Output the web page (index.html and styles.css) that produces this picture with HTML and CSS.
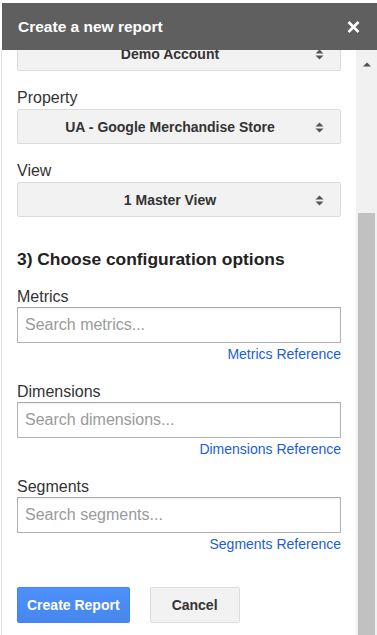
FILE: index.html
```html
<!DOCTYPE html>
<html>
<head>
<meta charset="utf-8">
<link rel="stylesheet" href="styles.css">
</head>
<body>
<div class="frame">
  <div class="header">
    <span class="title">Create a new report</span>
    <svg class="close" width="13" height="12" viewBox="0 0 13 12"><path d="M1.5 1 L11.5 11 M11.5 1 L1.5 11" stroke="#fff" stroke-width="2.6" fill="none"/></svg>
  </div>
  <div class="main">
    <div class="panel">
      <div class="inner">
        <div class="select first"><span>Demo Account</span><svg class="arrows" width="9" height="11" viewBox="0 0 9 11"><path d="M0.5 4.5 L4.5 0.5 L8.5 4.5 Z M0.5 6.5 L8.5 6.5 L4.5 10.5 Z" fill="#555"/></svg></div>
        <div class="label">Property</div>
        <div class="select"><span>UA - Google Merchandise Store</span><svg class="arrows" width="9" height="11" viewBox="0 0 9 11"><path d="M0.5 4.5 L4.5 0.5 L8.5 4.5 Z M0.5 6.5 L8.5 6.5 L4.5 10.5 Z" fill="#555"/></svg></div>
        <div class="label">View</div>
        <div class="select"><span>1 Master View</span><svg class="arrows" width="9" height="11" viewBox="0 0 9 11"><path d="M0.5 4.5 L4.5 0.5 L8.5 4.5 Z M0.5 6.5 L8.5 6.5 L4.5 10.5 Z" fill="#555"/></svg></div>
        <h2 class="heading">3) Choose configuration options</h2>
        <div class="field">
          <div class="label">Metrics</div>
          <div class="input">Search metrics...</div>
          <a class="ref">Metrics Reference</a>
        </div>
        <div class="field">
          <div class="label">Dimensions</div>
          <div class="input">Search dimensions...</div>
          <a class="ref">Dimensions Reference</a>
        </div>
        <div class="field">
          <div class="label">Segments</div>
          <div class="input">Search segments...</div>
          <a class="ref">Segments Reference</a>
        </div>
        <div class="buttons">
          <button class="btn primary">Create Report</button>
          <button class="btn secondary">Cancel</button>
        </div>
      </div>
    </div>
    <div class="scrollbar">
      <div class="up"><svg width="8" height="5" viewBox="0 0 8 5"><path d="M0 4.5 L4 0.5 L8 4.5 Z" fill="#505050"/></svg></div>
      <div class="track"><div class="thumb"></div></div>
    </div>
  </div>
</div>
</body>
</html>
```

FILE: styles.css
```css
html, body {
  margin: 0;
  padding: 0;
  background: #fff;
}
body {
  font-family: "Liberation Sans", Arial, sans-serif;
  color: #333;
}
.frame {
  width: 377px;
  height: 635px;
  box-sizing: border-box;
  padding-top: 3px;
  padding-left: 1px;
  display: flex;
  flex-direction: column;
  overflow: hidden;
}
.header {
  height: 47px;
  margin-left: 1px;
  background: #5f5f5f;
  display: flex;
  align-items: center;
  justify-content: space-between;
  padding: 0 17px 0 16px;
  flex-shrink: 0;
  position: relative;
  z-index: 2;
}
.title {
  color: #fff;
  font-weight: bold;
  font-size: 15.5px;
}
.close {
  display: block;
  margin-top: 1px;
}
.main {
  flex: 1;
  display: flex;
  min-height: 0;
}
.panel {
  flex: 1;
  border-left: 1px solid #e2e2e2;
  padding: 0 15px;
  overflow: hidden;
}
.inner {
  margin-top: -14px;
}
.select {
  height: 35px;
  box-sizing: border-box;
  background: #f2f2f2;
  border: 1px solid #dcdcdc;
  border-radius: 2px;
  display: flex;
  align-items: center;
  position: relative;
  padding: 0 32px 0 14px;
  font-size: 14px;
  font-weight: bold;
  color: #333;
}
.select span {
  flex: 1;
  text-align: center;
}
.arrows {
  position: absolute;
  right: 16px;
  top: 12px;
}
.label {
  font-size: 16px;
  line-height: 20px;
  margin-top: 17px;
  margin-bottom: 1px;
  color: #333;
}
.heading {
  font-size: 17.4px;
  font-weight: bold;
  line-height: 24px;
  margin: 30px 0 0;
  color: #222;
}
.field .label {
  margin-top: 20px;
  margin-bottom: 0;
}
.heading + .field .label {
  margin-top: 16px;
}
.input {
  height: 36px;
  box-sizing: border-box;
  border: 1px solid #b3b3b3;
  border-top-color: #a9a9a9;
  box-shadow: inset 0 1px 2px rgba(0, 0, 0, 0.06);
  padding: 0 7px;
  display: flex;
  align-items: center;
  font-size: 16px;
  color: #9a9a9a;
}
.ref {
  display: block;
  text-align: right;
  font-size: 14px;
  line-height: 16px;
  margin-top: 3px;
  color: #1a5ed6;
}
.buttons {
  display: flex;
  gap: 20px;
  margin-top: 35px;
}
.btn {
  height: 36px;
  font-family: "Liberation Sans", Arial, sans-serif;
  font-size: 14px;
  font-weight: bold;
  border-radius: 2px;
  box-sizing: border-box;
  cursor: pointer;
}
.primary {
  background: linear-gradient(#4d90fe, #4787ed);
  border: 1px solid #3f85f5;
  color: #fff;
  padding: 0 9px;
}
.secondary {
  background: #f2f2f2;
  border: 1px solid #dcdcdc;
  color: #333;
  min-width: 90px;
}
.scrollbar {
  width: 21px;
  background: #f1f1f1;
  display: flex;
  flex-direction: column;
}
.up {
  height: 27px;
  display: flex;
  align-items: flex-end;
  justify-content: center;
  box-sizing: border-box;
}
.up svg {
  display: block;
  margin-bottom: 10px;
}
.track {
  flex: 1;
  padding: 136px 2px 0;
}
.thumb {
  height: 100%;
  background: #c1c1c1;
}
```
